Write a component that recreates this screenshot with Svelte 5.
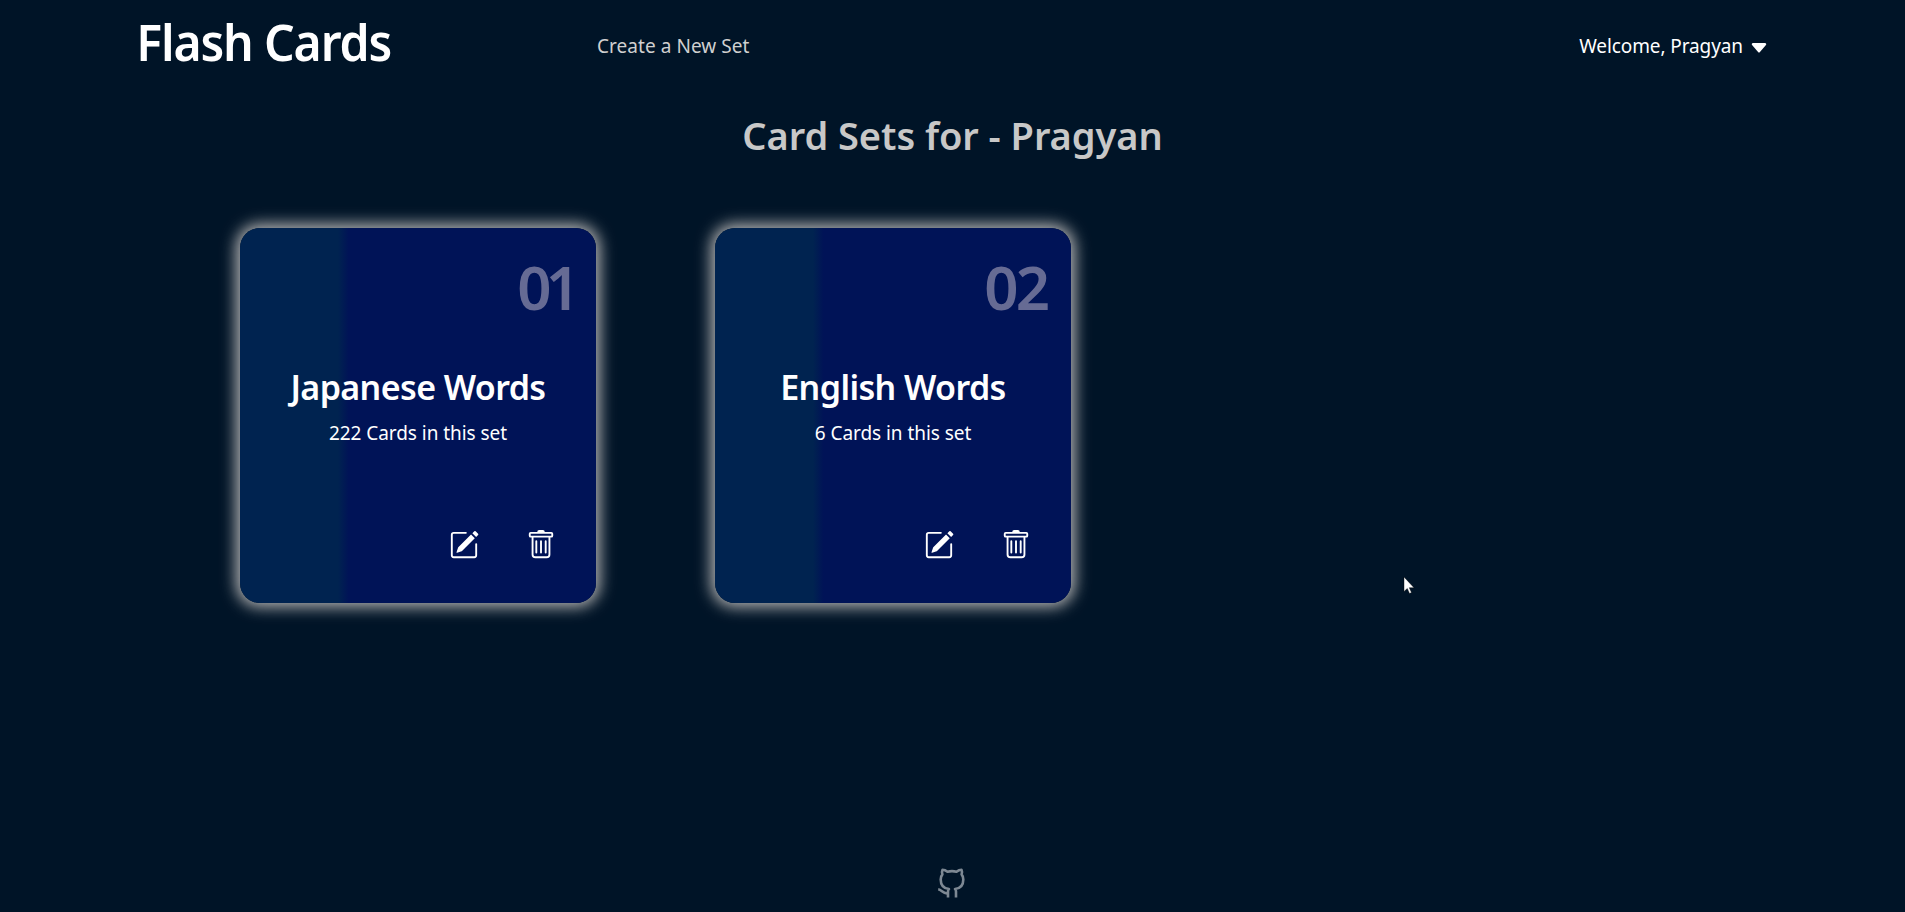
<script>
  const sets = [
    { number: '01', title: 'Japanese Words', count: 222 },
    { number: '02', title: 'English Words', count: 6 }
  ];
</script>

<div class="page">
  <header>
    <h1>Flash Cards</h1>
    <nav><span class="create">Create a New Set</span></nav>
    <div class="user">
      <span class="welcome">Welcome, Pragyan</span>
      <svg class="caret" viewBox="0 0 16 16" fill="currentColor"><path d="m7.247 11.14-4.796-5.481C1.885 5.013 2.345 4 3.204 4h9.592a1 1 0 0 1 .753 1.659l-4.796 5.48a1 1 0 0 1-1.506 0z" /></svg>
    </div>
  </header>

  <main>
    <h2>Card Sets for - Pragyan</h2>
    <div class="grid">
      {#each sets as set}
        <article class="card">
          <div class="number" class:tight={set.number.endsWith('1')}>{set.number}</div>
          <h3>{set.title}</h3>
          <p>{set.count} Cards in this set</p>
          <div class="actions">
            <svg viewBox="0 0 16 16" fill="currentColor"><path d="M15.502 1.94a.5.5 0 0 1 0 .706L14.459 3.69l-2-2L13.502.646a.5.5 0 0 1 .707 0l1.293 1.293zm-1.75 2.456-2-2L4.939 9.21a.5.5 0 0 0-.121.196l-.805 2.414a.25.25 0 0 0 .316.316l2.414-.805a.5.5 0 0 0 .196-.12l6.813-6.814z" /><path fill-rule="evenodd" d="M1 13.5A1.5 1.5 0 0 0 2.5 15h11a1.5 1.5 0 0 0 1.5-1.5v-6a.5.5 0 0 0-1 0v6a.5.5 0 0 1-.5.5h-11a.5.5 0 0 1-.5-.5v-11a.5.5 0 0 1 .5-.5H9a.5.5 0 0 0 0-1H2.5A1.5 1.5 0 0 0 1 2.5v11z" /></svg>
            <svg viewBox="0 0 16 16" fill="currentColor"><path d="M5.5 5.5A.5.5 0 0 1 6 6v6a.5.5 0 0 1-1 0V6a.5.5 0 0 1 .5-.5zm2.5 0a.5.5 0 0 1 .5.5v6a.5.5 0 0 1-1 0V6a.5.5 0 0 1 .5-.5zm3 .5a.5.5 0 0 0-1 0v6a.5.5 0 0 0 1 0V6z" /><path fill-rule="evenodd" d="M14.5 3a1 1 0 0 1-1 1H13v9a2 2 0 0 1-2 2H5a2 2 0 0 1-2-2V4h-.5a1 1 0 0 1-1-1V2a1 1 0 0 1 1-1H6a1 1 0 0 1 1-1h2a1 1 0 0 1 1 1h3.5a1 1 0 0 1 1 1v1zM4.118 4 4 4.059V13a1 1 0 0 0 1 1h6a1 1 0 0 0 1-1V4.059L11.882 4H4.118zM2.5 3V2h11v1h-11z" /></svg>
          </div>
        </article>
      {/each}
    </div>
  </main>

  <footer>
    <svg viewBox="0 0 30 30" fill="none" stroke="currentColor" stroke-width="2.6" stroke-linejoin="round"><path d="M11 29.500V23.500Q11 21.800 12 21C6.500 20.500 3.700 17 3.700 11.500C3.700 9.300 4.300 7.700 5.400 6.400C4.800 4.800 4.900 3 5.500 1.700C7.400 1.700 9 2.500 10.500 3.700C13.500 3 16.500 3 19.500 3.700C21 2.500 22.600 1.700 24.500 1.700C25.100 3 25.200 4.800 24.600 6.400C25.700 7.700 26.300 9.300 26.300 11.500C26.300 17 23.500 20.500 18 21Q19 21.800 19 23.500V29.500M11 25.300C6 26.300 5 21.800 1.200 21.200" /></svg>
  </footer>

  <svg class="pointer" viewBox="0 0 12 19"><path d="M1 1V15.500L4.300 12.500L6.500 17.500L8.500 16.600L6.300 11.700H11Z" fill="#fff" stroke="#000" stroke-width=".4" /></svg>
</div>

<style>
  :global(body) { margin: 0; background: #001427; }
  .page {
    height: 912px;
    box-sizing: border-box;
    display: flex;
    flex-direction: column;
    overflow: hidden;
    background: #001427;
    color: #fff;
    font-family: "Noto Sans", "Open Sans", sans-serif;
    position: relative;
  }
  h1, h2, h3, p { margin: 0; font-weight: 600; white-space: nowrap; }
  header { height: 92px; display: flex; padding: 0 136px 0 136px; }
  h1 { width: 461px; font-size: 50px; line-height: 84px; letter-spacing: -1.2px; transform: scaleX(.964); transform-origin: 4px 0; }
  nav { flex: 1; }
  .create, .welcome { font-size: 19px; line-height: 92px; letter-spacing: -.1px; white-space: nowrap; }
  .create { color: #d0d0d0; letter-spacing: .05px; }
  .user { display: flex; align-items: center; gap: 6px; }
  .caret { width: 20px; height: 20px; margin-top: 3px; }
  main { flex: 1; }
  h2 { text-align: center; color: #c8c8c8; font-size: 38px; line-height: 52px; padding-top: 17px; letter-spacing: -.05px; }
  .grid { display: flex; gap: 119px; padding: 67px 0 0 240px; }
  .card {
    width: 356px;
    height: 375px;
    box-sizing: border-box;
    border-radius: 20px;
    background: linear-gradient(90deg, #002350 27.5%, #001357 30.5%);
    box-shadow: 0 0 15px 4px #b4b4b4;
    display: flex;
    flex-direction: column;
  }
  .number { text-align: right; padding: 19px 24px 0 0; font-size: 60px; line-height: 80px; font-weight: 600; letter-spacing: -3px; color: #666b94; }
  .number.tight { letter-spacing: -6px; padding-right: 22px; }
  h3 { text-align: center; font-size: 34px; line-height: 46px; padding-top: 37px; letter-spacing: -.6px; }
  p { text-align: center; font-size: 19px; line-height: 28px; font-weight: 400; padding-top: 9px; letter-spacing: -.05px; }
  .actions { display: flex; justify-content: flex-end; gap: 47px; padding: 83px 40px 0 0; }
  .actions svg { width: 30px; height: 30px; }
  footer { display: flex; justify-content: center; padding-bottom: 14px; color: #7d8893; }
  footer svg { width: 30px; height: 30px; margin-right: 1px; }
  .pointer { position: absolute; left: 1403px; top: 576px; width: 12px; height: 19px; }
</style>
